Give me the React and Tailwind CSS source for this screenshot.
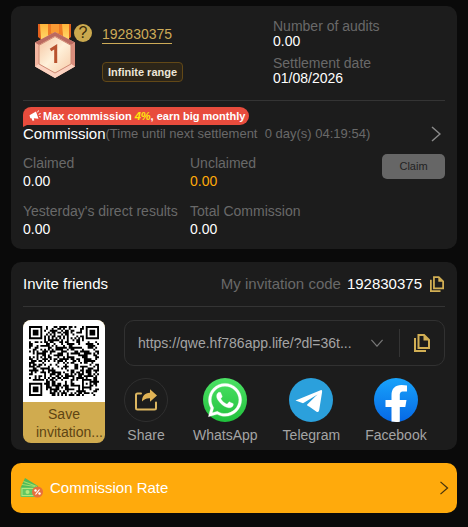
import React from 'react';
import { FaWhatsapp } from 'react-icons/fa6';

const INVITE_CODE = '192830375';

const commissionStats = [
  { label: 'Claimed', value: '0.00', color: 'text-white' },
  { label: 'Unclaimed', value: '0.00', color: 'text-[#ffaa09]' },
  { label: "Yesterday's direct results", value: '0.00', color: 'text-white' },
  { label: 'Total Commission', value: '0.00', color: 'text-white' },
];

const QR_SIZE = 37;

function inSquare(x, y, left, top, size) {
  return x >= left && x < left + size && y >= top && y < top + size;
}

// dark / light module of the code, with the three finders and the alignment mark
function isDark(x, y) {
  const finders = [[0, 0], [QR_SIZE - 7, 0], [0, QR_SIZE - 7]];
  for (const [fx, fy] of finders) {
    if (inSquare(x, y, fx - 1, fy - 1, 9)) {
      const d = Math.max(Math.abs(x - fx - 3), Math.abs(y - fy - 3));
      return d <= 1 || d === 3;
    }
  }
  const a = Math.max(Math.abs(x - 30), Math.abs(y - 30));
  if (a <= 2) return a !== 1;
  if (x === 6 || y === 6) return (x + y) % 2 === 0;
  let h = (x * 374761393 + y * 668265263) | 0;
  h = Math.imul(h ^ (h >>> 13), 1274126177);
  return ((h ^ (h >>> 16)) & 255) < 132;
}

function QrCode() {
  let d = '';
  for (let y = 0; y < QR_SIZE; y++) {
    for (let x = 0; x < QR_SIZE; x++) {
      if (isDark(x, y)) d += `M${x} ${y}h1v1h-1z`;
    }
  }
  return (
    <svg viewBox="0 0 37 37" className="block h-[70px] w-[70px]" aria-label="Invitation QR code">
      <path d={d} fill="#000" />
    </svg>
  );
}

function MedalIcon() {
  return (
    <svg viewBox="0 0 42 54" className="h-[54px] w-[42px] shrink-0">
      <defs>
        <linearGradient id="medalFace" x1="0" y1="0" x2="1" y2="1">
          <stop offset="0" stopColor="#f5c3a0" />
          <stop offset="0.5" stopColor="#fff1da" />
          <stop offset="1" stopColor="#f7cba8" />
        </linearGradient>
        <linearGradient id="ribbonGold" x1="0" y1="0" x2="0" y2="1">
          <stop offset="0" stopColor="#ffb43a" />
          <stop offset="1" stopColor="#ffd768" />
        </linearGradient>
      </defs>
      <path d="M4 0h33v13l-5 4H9l-5-4z" fill="#e2601c" />
      <path d="M6 0h8v15H7z" fill="url(#ribbonGold)" />
      <path d="M14 0h14v12H14z" fill="#ee7a24" />
      <path d="M17 0h8v9h-8z" fill="#f89a34" />
      <path d="M28 0h7v15h-6z" fill="url(#ribbonGold)" />
      <path d="M21 8L41 18.500v24L21 54 1 42.500v-24z" fill="#f3b5a0" />
      <path d="M21 8L41 18.500 37 21 21 12 5 21 1 18.500z" fill="#ba6a60" />
      <path d="M41 18.500v24L37 40V21z" fill="#d98d7c" />
      <path d="M1 42.500L5 40l16 9 16-9 4 2.500L21 54z" fill="#fbd2c0" />
      <path d="M21 12.500l16 8.800V40l-16 9-16-9V21.300z" fill="url(#medalFace)" stroke="#cf8a74" strokeWidth="1" />
      <path d="M16.500 26L21.700 22.700V39" fill="none" stroke="#b9532f" strokeWidth="3" />
    </svg>
  );
}

function CopyIcon({ className }) {
  return (
    <svg viewBox="0 0 16 18" className={className} fill="none" stroke="#d2af54" strokeWidth="2">
      <path d="M1 4v13h11" />
      <path d="M4.500 1H10l5 5v8H4.500z" />
      <path d="M9.500 1v5.500H15z" fill="#d2af54" stroke="none" />
    </svg>
  );
}

function ShareIcon() {
  return (
    <svg viewBox="0 0 22 22" className="h-[22px] w-[22px]">
      <path d="M6 4.500H2.500Q1 4.500 1 6v13q0 1.500 1.500 1.500h17q1.500 0 1.500-1.500v-5.500" fill="none" stroke="#dcb660" strokeWidth="2" strokeLinecap="round" />
      <path d="M15 0.300L22 6.500 15 12.700V9.200C11 9 9 10.300 7 12.500 7 7 9.500 4 15 3.700z" fill="#e0b355" />
    </svg>
  );
}

function TelegramIcon() {
  return (
    <svg viewBox="0 0 44 44" className="h-11 w-11">
      <circle cx="22" cy="22" r="22" fill="#2ba0dc" />
      <path d="M6.500 22.500L31.500 12.200Q33.500 11.600 33.100 13.900L30.200 32Q29.700 35 27.200 33.400L18 27 28.500 16.500 14 25.300z" fill="#fff" />
      <path d="M18 27L28.500 16.500 20 28.400z" fill="#fff" />
    </svg>
  );
}

function FacebookIcon() {
  return (
    <svg viewBox="0 0 44 44" className="h-11 w-11">
      <defs>
        <linearGradient id="fbBlue" x1="0" y1="0" x2="0" y2="1">
          <stop offset="0" stopColor="#18a3fb" />
          <stop offset="1" stopColor="#0668e5" />
        </linearGradient>
      </defs>
      <circle cx="22" cy="22" r="22" fill="url(#fbBlue)" />
      <path d="M17.500 43.600V29H11.500V22H17.500V17.500C17.500 10.500 21 7 27.500 7Q30.500 7 33 7.500V13.500H29.500C26.500 13.500 25.800 15 25.800 17.500V22H32.500L31.300 29H25.800V43.700Q22 44.300 17.500 43.600z" fill="#fff" />
    </svg>
  );
}

function MoneyIcon() {
  return (
    <svg viewBox="0 0 24 22" className="h-[22px] w-6">
      <path d="M1 10L5 1l13 8v4H1z" fill="#4fbb58" />
      <path d="M3.500 4.500L17 9.500M2 7.500l13 2" fill="none" stroke="#a4dc6c" strokeWidth="1.200" />
      <rect x="0.500" y="10" width="18" height="10" rx="1" fill="#63c863" />
      <rect x="2" y="11.500" width="14" height="7" fill="none" stroke="#b4e67c" />
      <circle cx="7.500" cy="15" r="2" fill="#b4e67c" />
      <circle cx="17.500" cy="15" r="5.500" fill="#e8703c" />
      <path d="M15.500 17.500l4-5" stroke="#fff" strokeWidth="1.200" />
      <circle cx="15.500" cy="13.500" r="1.200" fill="#fff" />
      <circle cx="19.500" cy="16.500" r="1.200" fill="#fff" />
    </svg>
  );
}

function MegaphoneIcon() {
  return (
    <svg viewBox="0 0 12 12" className="h-3 w-3" fill="#fff">
      <path d="M0.500 5.200L7 1.500 9.500 8.800 4.800 8.300 5.300 10.500 3.500 10.800 2.500 8.300 1.300 8.200z" />
      <path d="M8.600 2.300L9.500 0.500M9.600 4.300L11.700 3.500M10.200 6.500L11.800 7" stroke="#fff" strokeWidth="1" />
    </svg>
  );
}

function Chevron({ className }) {
  return (
    <svg viewBox="0 0 10 16" className={className} fill="none" stroke="currentColor" strokeWidth="1.500">
      <path d="M1 1l8 7-8 7" />
    </svg>
  );
}

const shareTargets = [
  {
    label: 'Share',
    icon: (
      <span className="flex h-11 w-11 items-center justify-center rounded-full border border-[#2f2f2f]">
        <ShareIcon />
      </span>
    ),
  },
  {
    label: 'WhatsApp',
    icon: (
      <span className="flex h-11 w-11 items-center justify-center rounded-full bg-linear-to-b from-[#4be264] to-[#1fc13c]">
        <FaWhatsapp className="h-[38px] w-[38px] text-white" stroke="#fff" strokeWidth="4" />
      </span>
    ),
  },
  { label: 'Telegram', icon: <TelegramIcon /> },
  { label: 'Facebook', icon: <FacebookIcon /> },
];

function CommissionCard() {
  return (
    <section className="rounded-[10px] bg-[#1c1c1c] px-3 pb-[11px]">
      <div className="grid grid-cols-[250px_1fr] border-b border-[#343434] pt-3 pb-3.5">
        <div className="flex pt-1.5 pl-[11px]">
          <MedalIcon />
          <button type="button" aria-label="Level help" className="-ml-0.5 flex h-[18px] w-[18px] items-center justify-center rounded-full bg-[#cba94e] text-base leading-4 text-[#3a2c0c]">
            ?
          </button>
          <div className="ml-2.5 flex flex-col items-start gap-[18px] pt-0.5">
            <a href="#account" className="border-b border-[#cdab58] text-sm leading-[17px] text-[#cdab58]">{INVITE_CODE}</a>
            <span className="rounded-sm border border-[#624817] bg-[#2c2518] px-[5px] text-[11px] leading-[18px] font-bold text-[#ece6d8]">
              Infinite range
            </span>
          </div>
        </div>
        <dl className="text-sm leading-[15px]">
          <dt className="pt-px text-[#696969]">Number of audits</dt>
          <dd className="text-white">0.00</dd>
          <dt className="pt-[7px] text-[#696969]">Settlement date</dt>
          <dd className="text-white">01/08/2026</dd>
        </dl>
      </div>

      <div className="mt-1.5 flex">
        <p className="relative flex h-[18px] items-center gap-0.5 rounded-l-lg rounded-r-[9px] rounded-bl-none bg-[#e84c3d] pr-1 pl-1.5 text-[11px] font-bold text-white">
          <span className="absolute top-full left-0 h-0.5 w-1 bg-[#e84c3d] [clip-path:polygon(0_0,100%_0,0_100%)]" />
          <MegaphoneIcon />
          <span>Max commission <em className="text-[#ffe80a]">4%</em>, earn big monthly</span>
        </p>
      </div>
      <a href="#commission" className="flex h-[18px] items-center">
        <h2 className="text-[15px] text-white">Commission</h2>
        <span className="text-[13px] whitespace-pre text-[#696969]">(Time until next settlement  0 day(s) 04:19:54)</span>
        <Chevron className="mr-1 ml-auto h-4 w-2.5 text-[#8a8a8a]" />
      </a>

      <div className="mt-[11px] flex items-start justify-between">
        <dl className="grid grid-cols-[167px_120px] gap-y-3 text-sm">
          {commissionStats.map((stat) => (
            <div key={stat.label}>
              <dt className="leading-[18px] whitespace-nowrap text-[#696969]">{stat.label}</dt>
              <dd className={`leading-[18px] ${stat.color}`}>{stat.value}</dd>
            </div>
          ))}
        </dl>
        <button type="button" className="h-[25px] w-[63px] rounded-[5px] bg-[#666] text-[11px] text-[#222]">Claim</button>
      </div>
    </section>
  );
}

function InviteCard() {
  return (
    <section className="rounded-[10px] bg-[#1c1c1c] px-3 pb-1.5">
      <div className="flex h-[45px] items-center border-b border-[#343434] text-[15px]">
        <h2 className="text-white">Invite friends</h2>
        <span className="ml-auto text-[#696969]">My invitation code</span>
        <span className="ml-1.5 text-white">{INVITE_CODE}</span>
        <button type="button" aria-label="Copy code" className="mr-px ml-2">
          <CopyIcon className="h-4 w-3.5" />
        </button>
      </div>

      <div className="flex items-start gap-[19px] pt-[13px]">
        <div className="w-[82px] shrink-0 overflow-hidden rounded-lg bg-[#d0ab4f]">
          <div className="bg-white p-1.5">
            <QrCode />
          </div>
          <button type="button" className="block w-full px-[13px] pt-[3px] pb-0.5 text-sm leading-[18px] text-[#5f4513]">
            Save<br />invitation...
          </button>
        </div>

        <div className="min-w-0 flex-1">
          <div className="flex h-[46px] items-center rounded-[10px] border border-[#313131]">
            <select aria-label="Invitation link" className="min-w-0 flex-1 appearance-none bg-transparent pl-[13px] text-sm text-[#a4a4a4]">
              <option>https://qwe.hf786app.life/?dl=36t...</option>
            </select>
            <Chevron className="pointer-events-none mr-[18px] h-3.5 w-2 rotate-90 text-[#777]" />
            <span className="h-7 w-px bg-[#343434]" />
            <button type="button" aria-label="Copy link" className="px-3.5">
              <CopyIcon className="h-[18px] w-4" />
            </button>
          </div>
          <div className="mt-3 flex gap-[25px]">
            {shareTargets.map((target) => (
              <button key={target.label} type="button" className="flex flex-col items-center gap-1 text-sm leading-[18px] text-[#a4a4a4]">
                {target.icon}
                {target.label}
              </button>
            ))}
          </div>
        </div>
      </div>
    </section>
  );
}

function App() {
  return (
    <main className="flex min-h-screen flex-col gap-[13px] bg-[#0a0a0a] px-[11px] pt-1.5 pb-3.5 font-['Liberation_Sans',Arial,sans-serif]">
      <CommissionCard />
      <InviteCard />
      <a href="#rate" className="flex h-[50px] items-center rounded-[10px] bg-[#ffaa0c] pr-2 pl-[9px] text-[15px] text-white">
        <MoneyIcon />
        <span className="ml-1.5">Commission Rate</span>
        <Chevron className="ml-auto h-3.5 w-2.5 text-[#4a350c]" />
      </a>
    </main>
  );
}

export default App;
